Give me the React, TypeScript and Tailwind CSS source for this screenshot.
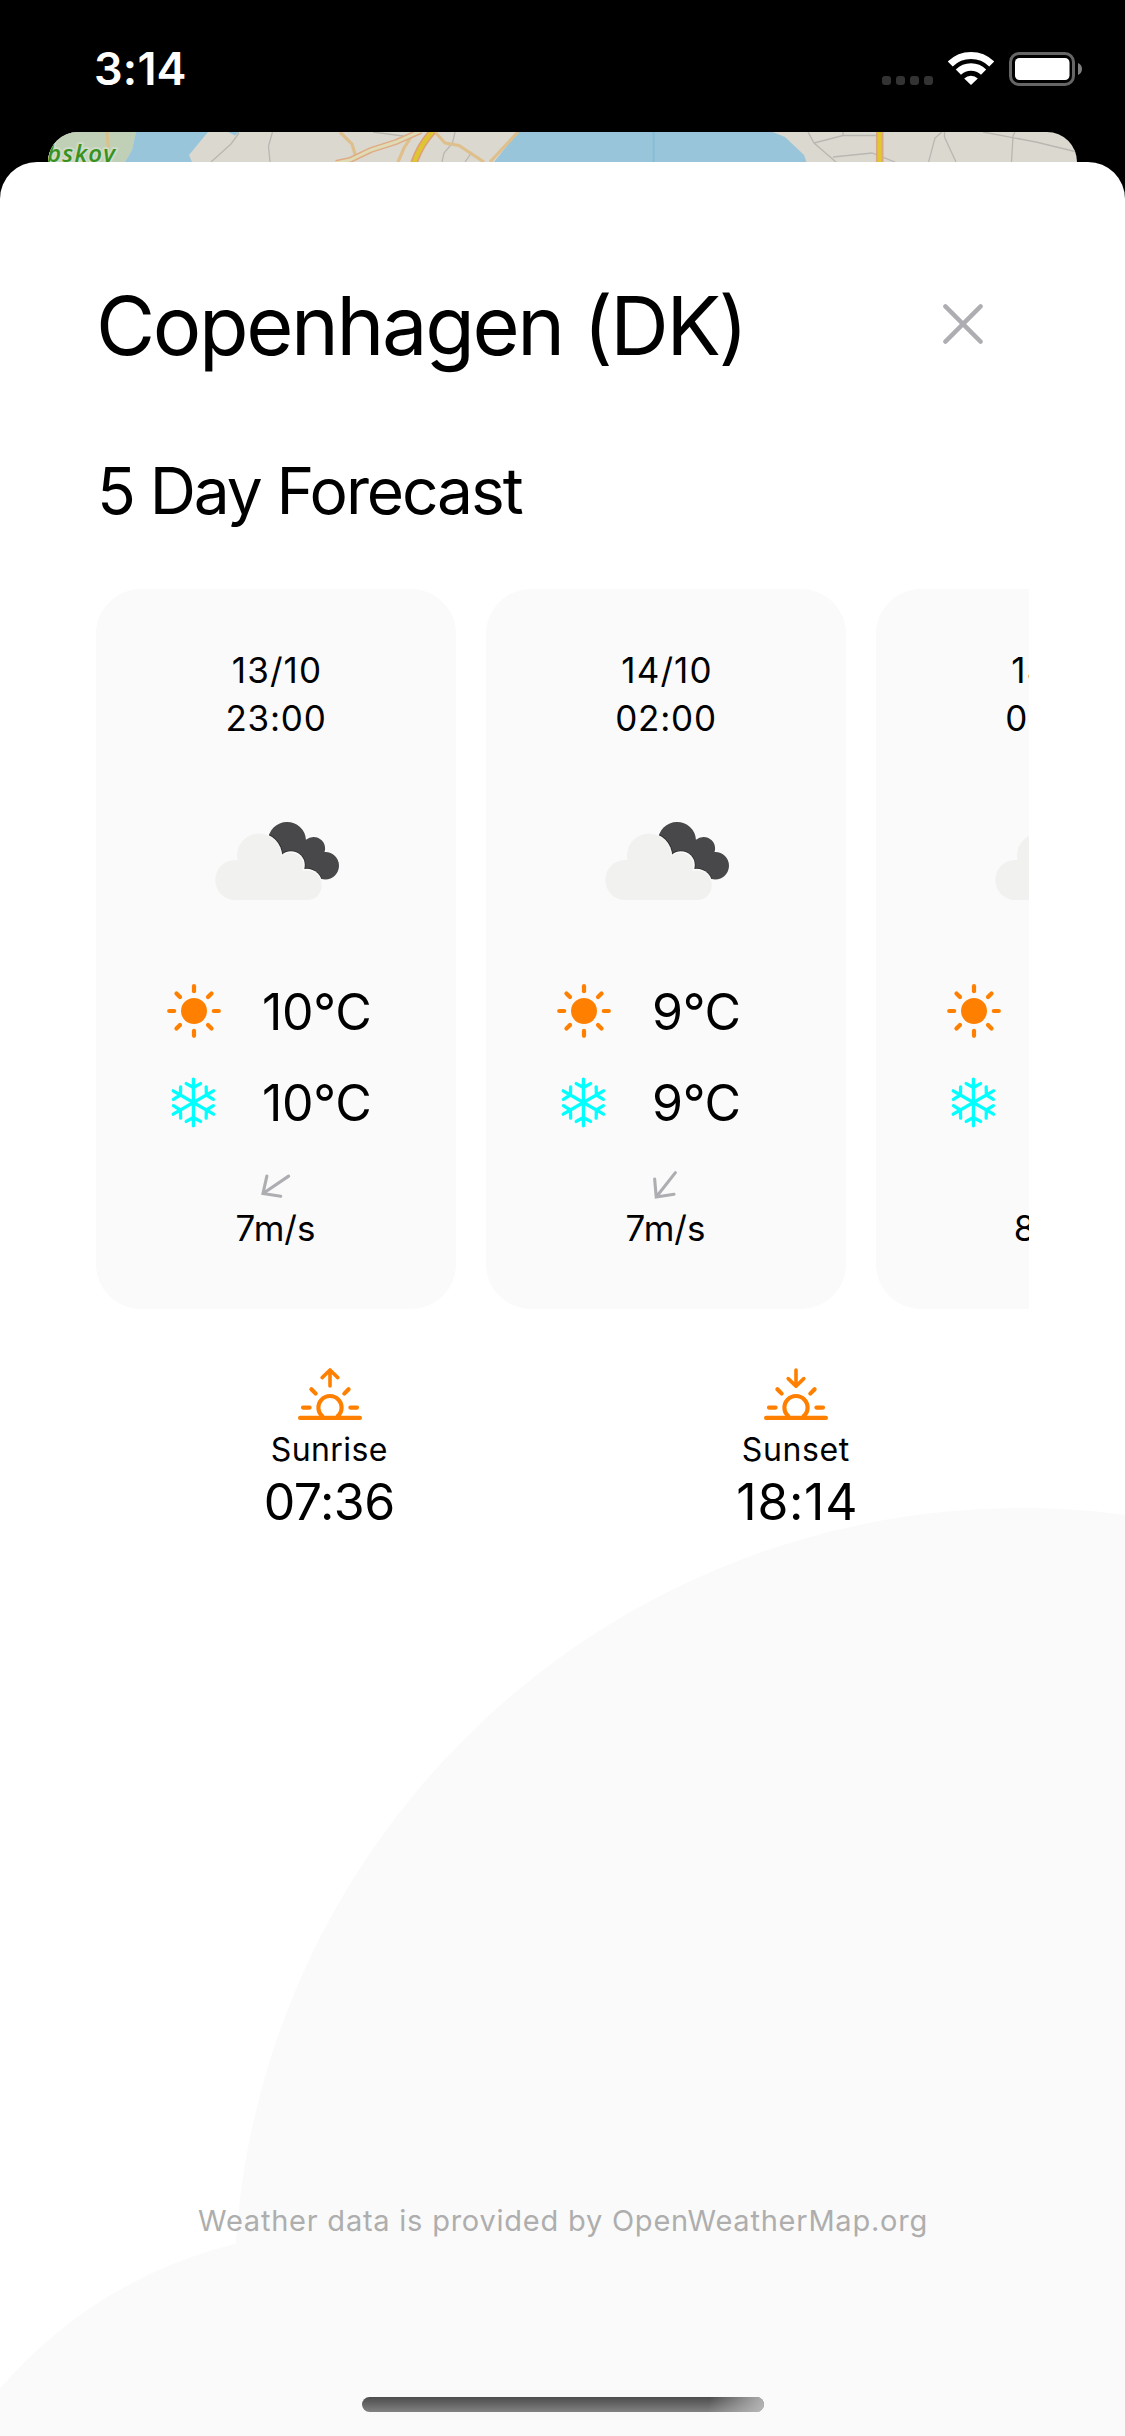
import type { ReactNode } from 'react'

type Forecast = {
  date: string
  time: string
  high: string
  low: string
  wind: string
  windAngle: number
}

const forecasts: Forecast[] = [
  { date: '13/10', time: '23:00', high: '10°C', low: '10°C', wind: '7m/s', windAngle: 55.9 },
  { date: '14/10', time: '02:00', high: '9°C', low: '9°C', wind: '7m/s', windAngle: 38.2 },
  { date: '14/10', time: '05:00', high: '9°C', low: '9°C', wind: '8m/s', windAngle: 38.2 },
]

function CellularDots() {
  return (
    <svg className="h-[34px] w-[51px]" viewBox="0 0 51 34" fill="#333333">
      {[0, 14, 28, 42].map((x) => (
        <rect key={x} x={x} y="24" width="9" height="9" rx="3" />
      ))}
    </svg>
  )
}

function WifiIcon() {
  return (
    <svg className="h-[34px] w-[46px]" viewBox="0 0 46 34" fill="none" stroke="#ffffff">
      <path d="M2.3 12A29.5 29.5 0 0 1 43.7 12" strokeWidth="7" />
      <path d="M10.4 20.2A18 18 0 0 1 35.6 20.2" strokeWidth="7.4" />
      <path d="M23 33L16.2 26.4A10 10 0 0 1 29.8 26.4Z" fill="#ffffff" stroke="none" />
    </svg>
  )
}

function BatteryIcon() {
  return (
    <svg className="h-[34px] w-[73px]" viewBox="0 0 73 34" fill="none">
      <rect x="1.5" y="1.5" width="63" height="31" rx="8.5" stroke="#666666" strokeWidth="3" />
      <rect x="6" y="6" width="54.5" height="22" rx="4.5" fill="#ffffff" />
      <path d="M69 11C71.4 12 73 14.3 73 17S71.4 22 69 23Z" fill="#808080" />
    </svg>
  )
}

function MapStrip() {
  return (
    <svg className="block h-[30px] w-[1029px]" viewBox="0 0 1029 30" fill="none">
      <rect width="1029" height="30" fill="#dbd8d0" />
      <path d="M0 0H88L84 18L77 30H0Z" fill="#c0d0b6" />
      <path d="M59 0L60.5 20" stroke="#dcc08a" strokeWidth="3" />
      <path d="M88 0H160L141 23L144 30H77L84 18Z" fill="#98c5d9" />
      <path d="M180 0H191L187 3.5Z" fill="#98c5d9" />
      <path d="M470 0H724.6L737 5L756 23L758.5 30H446Z" fill="#98c5d9" />
      <path d="M605.7 0V30" stroke="#86bdd7" strokeWidth="2" />
      <g stroke="#b9b7b2" strokeWidth="1.3">
        <path d="M191 1L183 12L163 30" />
        <path d="M224.5 0L220.5 14L222 30" />
        <path d="M325 0L355 4" />
        <path d="M407 0L404.5 11L396 21L394 30" />
        <path d="M424 20L417 30" />
        <path d="M760 0L766 11L788 30M766 11L795 3.5H828M795 3.5V0" />
        <path d="M785 25L824 21L847 30" />
        <path d="M894 0L887 6L880.6 30M896.5 0V5L908 30" />
        <path d="M935 0L988 10L1029 20M967 0L965 4L963.5 30" />
      </g>
      <g stroke="#dfc08c" strokeWidth="3.2">
        <path d="M292 0L304 12L308.5 27" />
        <path d="M363 5L356 16L350 30" />
        <path d="M387 0L397 11L411 13.5L436 30" />
        <path d="M470 0L455 16L442 30" />
      </g>
      <path d="M288 31L302 28L323 18L348 10L373 -1" stroke="#dfab85" strokeWidth="6" />
      <path d="M288 31L302 28L323 18L348 10L373 -1" stroke="#dfdbb5" strokeWidth="3" />
      <path d="M366 31Q372 13 385 -1" stroke="#dfa07a" strokeWidth="7.5" />
      <path d="M366 31Q372 13 385 -1" stroke="#dfc530" strokeWidth="4.2" />
      <path d="M831.7 0V30" stroke="#dfa582" strokeWidth="7.5" />
      <path d="M831.7 0V30" stroke="#dfc92e" strokeWidth="4" />
      <text
        x="-1"
        y="30"
        textLength="68"
        className="font-['Open_Sans'] text-[24px] font-semibold italic"
        fill="#379220"
        stroke="#d0dac8"
        strokeWidth="4"
        strokeLinejoin="round"
        paintOrder="stroke"
      >
        bskov
      </text>
    </svg>
  )
}

function CloseIcon() {
  return (
    <svg className="h-10 w-10" viewBox="0 0 40 40" stroke="#aeaeb2" strokeWidth="4.4" strokeLinecap="round">
      <path d="M2.4 2.4L37.6 37.6M37.6 2.4L2.4 37.6" />
    </svg>
  )
}

function BrokenClouds() {
  const lobes = [
    [44, 34, 23.1],
    [76, 43, 13.8],
    [91.5, 62.5, 15.8],
  ]
  return (
    <svg className="ml-[2px] h-[78px] w-[124px]" viewBox="0 0 124 78">
      <defs>
        <clipPath id="rear-cloud">
          <circle cx="72" cy="19" r="19" />
          <circle cx="98.5" cy="26.5" r="11.6" />
          <circle cx="110.3" cy="43.8" r="13.7" />
          <path d="M60 18L90.5 18L108.5 30L106 57L84 48Z" />
        </clipPath>
      </defs>
      <g clipPath="url(#rear-cloud)">
        <rect width="124" height="78" fill="#48484a" />
        {lobes.map(([cx, cy, r]) => (
          <circle key={cx} cx={cx} cy={cy} r={r} fill="#2c2c2e" stroke="#2c2c2e" strokeWidth="1.6" />
        ))}
      </g>
      <g fill="#fafafa">
        {lobes.map(([cx, cy, r]) => (
          <circle key={cx} cx={cx} cy={cy} r={r} />
        ))}
      </g>
      <g fill="#f1f1ef">
        <circle cx="44" cy="33.5" r="22" />
        <circle cx="20.3" cy="58" r="20" />
        <circle cx="75.5" cy="43.7" r="12.9" />
        <circle cx="92" cy="63.2" r="14.8" />
        <path d="M20 78L24 40L66 38L84 48L92 60V78Z" />
      </g>
    </svg>
  )
}

function SunIcon() {
  return (
    <svg className="h-[54px] w-[54px]" viewBox="-27 -27 54 54">
      <circle r="13" fill="#ff8000" />
      {[0, 45, 90, 135, 180, 225, 270, 315].map((a) => (
        <path
          key={a}
          d="M0 -19.8V-24.8"
          transform={`rotate(${a})`}
          stroke="#ff8000"
          strokeWidth="4.2"
          strokeLinecap="round"
        />
      ))}
    </svg>
  )
}

function SnowflakeIcon() {
  return (
    <svg className="h-[54px] w-[54px]" viewBox="-26.4 -27.5 54 54">
      {[0, 60, 120, 180, 240, 300].map((a) => (
        <path
          key={a}
          d="M0 0V-23.3M-7.2 -18.9L0 -15L7.2 -18.9"
          transform={`rotate(${a})`}
          fill="none"
          stroke="#00ffff"
          strokeWidth="3.3"
          strokeLinecap="round"
          strokeLinejoin="round"
        />
      ))}
    </svg>
  )
}

function WindArrow({ angle }: { angle: number }) {
  return (
    <svg className="h-9 w-9" viewBox="-18 -18 36 36">
      <path
        d="M0 -15.5V15.5M-12.3 2.4L0 15.5L12.3 2.4"
        transform={`translate(-0.2 -1.2) rotate(${angle})`}
        fill="none"
        stroke="#aeaeb2"
        strokeWidth="3.1"
        strokeLinecap="round"
      />
    </svg>
  )
}

function HorizonIcon({ rising }: { rising: boolean }) {
  return (
    <svg
      className="ml-px h-[52px] w-16"
      viewBox="0 0 64 52"
      fill="none"
      stroke="#ff8000"
      strokeWidth="4.2"
      strokeLinecap="round"
      strokeLinejoin="round"
    >
      <path d="M2.1 49.9H61.9" />
      <path d="M25.2 49A11.6 11.6 0 1 1 38.8 49" strokeLinecap="butt" />
      <path d="M5 39.6H11.6M52.4 39.6H59" />
      <path d="M13.4 21.2L17.7 25.6M50.6 21.2L46.3 25.6" />
      <path
        d={rising ? 'M32 18V2.2M24.2 9.6L32 2L39.8 9.6' : 'M32 2V17.8M24.2 10.6L32 18.2L39.8 10.6'}
        strokeWidth="3.6"
      />
    </svg>
  )
}

function TemperatureRow({ icon, value }: { icon: ReactNode; value: string }) {
  return (
    <div className="flex h-[91px] w-full items-center gap-[41px] pl-[71px]">
      {icon}
      <span className="pt-[3px] text-[50px] tracking-[-0.3px]">{value}</span>
    </div>
  )
}

function ForecastCard({ item }: { item: Forecast }) {
  return (
    <article className="flex h-[720px] w-[360px] shrink-0 flex-col items-center rounded-[45px] bg-[#fafafa] pt-[57px]">
      <div className="flex flex-col items-center text-[35px] leading-[48px]">
        <span className="pl-[2px] tracking-[1.1px]">{item.date}</span>
        <span className="tracking-[0.8px]">{item.time}</span>
      </div>
      <div className="mt-20 mb-[65px]">
        <BrokenClouds />
      </div>
      <TemperatureRow icon={<SunIcon />} value={item.high} />
      <TemperatureRow icon={<SnowflakeIcon />} value={item.low} />
      <div className="mt-[21px]">
        <WindArrow angle={item.windAngle} />
      </div>
      <span className="mt-[3px] pr-px text-[35px] leading-[42px]">{item.wind}</span>
    </article>
  )
}

export default function App() {
  return (
    <div className="flex h-[2436px] w-[1125px] flex-col overflow-hidden bg-black font-['Inter',sans-serif] text-black">
      <header className="flex h-[132px] shrink-0 items-center justify-between pt-[6px] pr-[43px] pl-[94px]">
        <span className="text-[45px] font-semibold tracking-[0.2px] text-white">3:14</span>
        <div className="flex items-center gap-[15px]">
          <CellularDots />
          <WifiIcon />
          <BatteryIcon />
        </div>
      </header>

      <div className="mx-12 h-[30px] shrink-0 overflow-hidden rounded-t-[30px]">
        <MapStrip />
      </div>

      <main className="relative flex h-[2274px] shrink-0 flex-col overflow-hidden rounded-t-[37px] bg-white">
        <div className="absolute top-[1346px] left-[234px] h-[1575px] w-[1575px] rounded-full bg-[#fafafa]" />
        <div className="absolute top-[2069px] -left-[108px] h-[900px] w-[900px] rounded-full bg-[#fafafa]" />

        <div className="relative flex flex-col px-24">
          <div className="mt-[112px] flex h-[100px] items-center justify-between">
            <h1 className="pt-[5px] text-[81px] tracking-[-2.38px] whitespace-nowrap">Copenhagen (DK)</h1>
            <button className="mr-[46px]" aria-label="Close">
              <CloseIcon />
            </button>
          </div>

          <h2 className="mt-[77px] pl-px text-[64px] leading-[80px] tracking-[-2.1px]">5 Day Forecast</h2>

          <section className="mt-[58px] flex gap-[30px] overflow-hidden">
            {forecasts.map((item) => (
              <ForecastCard key={item.time} item={item} />
            ))}
          </section>

          <section className="mt-[59px] grid grid-cols-2">
            <div className="flex flex-col items-center">
              <HorizonIcon rising />
              <span className="mt-[10px] text-[32px] leading-[40px] tracking-[0.4px]">Sunrise</span>
              <span className="text-[50px] leading-[64px] tracking-[-0.5px]">07:36</span>
            </div>
            <div className="flex flex-col items-center">
              <HorizonIcon rising={false} />
              <span className="mt-[10px] text-[32px] leading-[40px] tracking-[0.6px]">Sunset</span>
              <span className="pl-[3px] text-[50px] leading-[64px] tracking-[0.7px]">18:14</span>
            </div>
          </section>
        </div>

        <footer className="relative mt-[667px] flex flex-col items-center">
          <p className="pl-px text-[29px] leading-[40px] tracking-[0.77px] text-[#aeaeae]">
            Weather data is provided by OpenWeatherMap.org
          </p>
          <div className="mt-[156px] ml-px h-[15px] w-[402px] overflow-hidden rounded-full bg-linear-to-b from-[#4c4c4c] to-[#828282]">
            <div className="h-full w-full bg-[linear-gradient(100deg,rgba(190,190,190,0)_86%,rgba(190,190,190,0.9)_100%)]" />
          </div>
        </footer>
      </main>
    </div>
  )
}
